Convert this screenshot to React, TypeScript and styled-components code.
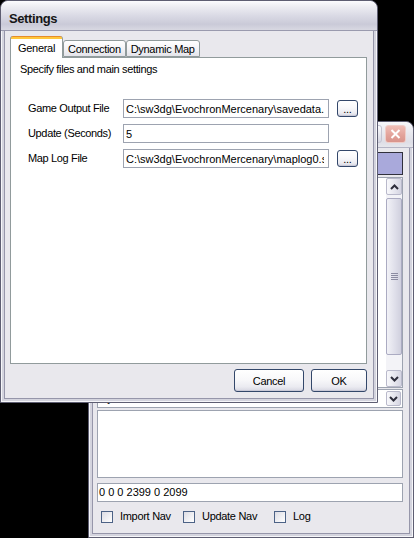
import React from "react";
import styled, { createGlobalStyle } from "styled-components";

const UI_FONT = `"Liberation Sans", Arial, sans-serif`;

const GlobalStyle = createGlobalStyle`
  html, body { margin: 0; padding: 0; background: #000; }
  body {
    font-family: ${UI_FONT};
    font-size: 11px;
    line-height: 13px;
    letter-spacing: -0.3px;
    color: #000;
  }
  *, *::before, *::after { box-sizing: border-box; }
`;

const Desktop = styled.div`
  position: relative;
  width: 414px;
  height: 538px;
  overflow: hidden;
  background: #000;
`;

const Window = styled.div<{ $x: number; $y: number; $w: number; $h: number }>`
  position: absolute;
  left: ${(p) => p.$x}px;
  top: ${(p) => p.$y}px;
  width: ${(p) => p.$w}px;
  height: ${(p) => p.$h}px;
  display: flex;
  flex-direction: column;
  background: #e9e8ed;
  border: 1px solid #5e5e72;
  border-radius: 8px 8px 0 0;
  box-shadow: inset 0 0 0 1px #f6f6f9, inset 0 0 0 3px #d4d4de,
    inset 0 0 0 4px #9696aa;
  overflow: hidden;
`;

const TitleBar = styled.div<{ $h: number; $inactive?: boolean }>`
  flex: none;
  height: ${(p) => p.$h}px;
  display: flex;
  align-items: center;
  padding: ${(p) => (p.$inactive ? "0 7px 2px 8px" : "5px 7px 0 8px")};
  border-radius: 7px 7px 0 0;
  border-bottom: 1px solid ${(p) => (p.$inactive ? "#b4b4c4" : "#9a9aae")};
  background: ${(p) =>
    p.$inactive
      ? "linear-gradient(#f7f7fa, #e9e9ef 40%, #dedee6 80%, #e6e6ec)"
      : "linear-gradient(#fcfcfe 0%, #eeeef3 18%, #dadae5 50%, #cacad8 80%, #d8d8e2 100%)"};
`;

const TitleText = styled.span`
  font: bold 13px ${UI_FONT};
  letter-spacing: -0.4px;
  color: #161616;
`;

const CaptionGroup = styled.div`
  margin-left: auto;
  display: flex;
  gap: 3px;
`;

const CaptionButton = styled.div`
  width: 21px;
  height: 18px;
  border: 1px solid #c4c4d2;
  border-radius: 3px;
  background: linear-gradient(#fbfbfd, #e4e4ec 60%, #d6d6e2);
`;

const CloseButton = styled.div`
  width: 21px;
  height: 18px;
  display: flex;
  align-items: center;
  justify-content: center;
  border: 1px solid #efcdc8;
  border-radius: 3px;
  background: linear-gradient(#efbdb6, #e3a39b 55%, #d9948c);
`;

/* ---------- back window ---------- */

const BackBody = styled.div`
  flex: 1;
  display: flex;
  flex-direction: column;
  padding: 4px 10px 0 8px;
`;

const Swatch = styled.div`
  flex: none;
  height: 23px;
  background: #a9a9db;
  border: 1px solid #30303c;
`;

const ListBox = styled.div`
  flex: none;
  height: 211px;
  margin-top: 2px;
  display: flex;
  background: #fff;
  border: 1px solid #9da3b0;
`;

const ListArea = styled.div`
  flex: 1;
`;

const VScroll = styled.div`
  flex: none;
  width: 16px;
  display: flex;
  flex-direction: column;
  background: #f3f3f7;
`;

const ScrollBtn = styled.div`
  flex: none;
  height: 17px;
  display: flex;
  align-items: center;
  justify-content: center;
  border: 1px solid #b9b9cb;
  border-radius: 2px;
  background: linear-gradient(90deg, #f8f8fb, #e4e4ed 60%, #d5d5e2);
`;

const Track = styled.div`
  flex: 1;
  display: flex;
  flex-direction: column;
  padding: 3px 0 15px;
`;

const Thumb = styled.div`
  flex: 1;
  display: flex;
  flex-direction: column;
  align-items: center;
  justify-content: center;
  gap: 1px;
  border: 1px solid #ababc2;
  border-radius: 2px;
  background: linear-gradient(90deg, #f2f2f7, #dedee9 60%, #d0d0de);
`;

const GripLine = styled.span`
  width: 7px;
  height: 1px;
  background: #8c8ca2;
`;

const Combo = styled.div`
  flex: none;
  height: 19px;
  margin-top: 1px;
  display: flex;
  align-items: center;
  background: #fff;
  border: 1px solid #9da3b0;
  padding: 0 1px 0 2px;
`;

const ComboText = styled.span`
  flex: 1;
  letter-spacing: 0;
`;

const ComboBtn = styled(ScrollBtn)`
  width: 15px;
  height: 15px;
`;

const Memo = styled.div`
  flex: none;
  height: 68px;
  margin-top: 2px;
  background: #fff;
  border: 1px solid #9da3b0;
`;

const Field = styled.div`
  flex: none;
  height: 19px;
  margin-top: 5px;
  display: flex;
  align-items: center;
  padding: 0 1px;
  background: #fff;
  border: 1px solid #9da3b0;
  letter-spacing: 0;
`;

const CheckRow = styled.div`
  flex: none;
  height: 19px;
  margin-top: 5px;
  padding-left: 4px;
  display: grid;
  grid-template-columns: 82px 91px auto;
  align-items: center;
`;

const CheckItem = styled.label`
  display: flex;
  align-items: center;
  gap: 7px;
`;

const CheckBox = styled.span`
  width: 12px;
  height: 12px;
  border: 1px solid #4c6286;
  background: linear-gradient(135deg, #dcdce4, #ffffff);
`;

/* ---------- settings dialog ---------- */

const DialogBody = styled.div`
  flex: 1;
  display: flex;
  flex-direction: column;
  padding: 5px 10px 10px 9px;
`;

const TabStrip = styled.div`
  flex: none;
  height: 21px;
  display: flex;
  align-items: flex-end;
  position: relative;
  z-index: 1;
`;

const Tab = styled.div<{ $active?: boolean }>`
  height: ${(p) => (p.$active ? 22 : 17)}px;
  margin-bottom: ${(p) => (p.$active ? -1 : 0)}px;
  padding: ${(p) => (p.$active ? "3px 7px 0" : "1px 4px 0")};
  display: flex;
  align-items: center;
  white-space: nowrap;
  border: 1px solid #919b9c;
  border-bottom: ${(p) => (p.$active ? "none" : "1px solid #919b9c")};
  border-top: ${(p) => (p.$active ? "none" : "1px solid #919b9c")};
  border-radius: 3px 3px 0 0;
  background: ${(p) =>
    p.$active
      ? "linear-gradient(#e68b2c 0, #e68b2c 1px, #ffc73c 1px, #ffc73c 3px, #ffffff 3px)"
      : "linear-gradient(#ffffff, #f1f1f4 60%, #e4e4ea)"};
`;

const TabPanel = styled.div`
  flex: 1;
  display: flex;
  flex-direction: column;
  padding: 5px 9px 0 9px;
  background: #fff;
  border: 1px solid #919b9c;
`;

const Intro = styled.div`
  letter-spacing: -0.35px;
`;

const FieldGrid = styled.div`
  margin-top: 23px;
  margin-left: 8px;
  display: grid;
  grid-template-columns: 95px 214px 21px;
  grid-auto-rows: 19px;
  row-gap: 6px;
  align-items: center;
`;

const FieldLabel = styled.span`
  letter-spacing: -0.35px;
`;

const TextInput = styled.input`
  width: 206px;
  height: 19px;
  margin: 0;
  padding: 0 4px 0 2px;
  font: 11px ${UI_FONT};
  letter-spacing: 0;
  color: #000;
  background: #fff;
  border: 1px solid #9da3b0;
  outline: none;
`;

const PushButton = styled.button<{ $w: number; $h: number }>`
  width: ${(p) => p.$w}px;
  height: ${(p) => p.$h}px;
  margin: 0;
  padding: 0;
  font: 11px ${UI_FONT};
  letter-spacing: -0.3px;
  color: #000;
  border: 1px solid #33476a;
  border-radius: 3px;
  background: linear-gradient(#ffffff 0%, #f8f8fa 45%, #ebebf1 80%, #d6d6e1 100%);
  box-shadow: inset 0 -1px 0 #c9c9d7;
`;

const ButtonRow = styled.div`
  flex: none;
  margin-top: 5px;
  display: flex;
  justify-content: flex-end;
  gap: 7px;
`;

const Chevron = ({ dir }: { dir: "up" | "down" }) => (
  <svg width="9" height="6" viewBox="0 0 9 6">
    <polyline
      points={dir === "up" ? "1,5 4.5,1.5 8,5" : "1,1 4.5,4.5 8,1"}
      fill="none"
      stroke="#2e2e3c"
      strokeWidth="2"
    />
  </svg>
);

const CloseX = () => (
  <svg width="11" height="10" viewBox="0 0 11 10">
    <path d="M1.5 1 L9.5 9 M9.5 1 L1.5 9" stroke="#fff" strokeWidth="2" fill="none" />
  </svg>
);

const files = [
  { label: "Game Output File", value: "C:\\sw3dg\\EvochronMercenary\\savedata.dat", browse: true },
  { label: "Update (Seconds)", value: "5", browse: false },
  { label: "Map Log File", value: "C:\\sw3dg\\EvochronMercenary\\maplog0.sav", browse: true },
];

export default function App() {
  return (
    <>
      <GlobalStyle />
      <Desktop>
        <Window $x={88} $y={121} $w={326} $h={417}>
          <TitleBar $h={26} $inactive>
            <CaptionGroup>
              <CaptionButton />
              <CloseButton>
                <CloseX />
              </CloseButton>
            </CaptionGroup>
          </TitleBar>
          <BackBody>
            <Swatch />
            <ListBox>
              <ListArea />
              <VScroll>
                <ScrollBtn>
                  <Chevron dir="up" />
                </ScrollBtn>
                <Track>
                  <Thumb>
                    <GripLine />
                    <GripLine />
                    <GripLine />
                    <GripLine />
                  </Thumb>
                </Track>
                <ScrollBtn>
                  <Chevron dir="down" />
                </ScrollBtn>
              </VScroll>
            </ListBox>
            <Combo>
              <ComboText>System</ComboText>
              <ComboBtn>
                <Chevron dir="down" />
              </ComboBtn>
            </Combo>
            <Memo />
            <Field>0 0 0 2399 0 2099</Field>
            <CheckRow>
              <CheckItem>
                <CheckBox />
                Import Nav
              </CheckItem>
              <CheckItem>
                <CheckBox />
                Update Nav
              </CheckItem>
              <CheckItem>
                <CheckBox />
                Log
              </CheckItem>
            </CheckRow>
          </BackBody>
        </Window>

        <Window $x={0} $y={0} $w={378} $h={403}>
          <TitleBar $h={30}>
            <TitleText>Settings</TitleText>
          </TitleBar>
          <DialogBody>
            <TabStrip>
              <Tab $active>General</Tab>
              <Tab>Connection</Tab>
              <Tab>Dynamic Map</Tab>
            </TabStrip>
            <TabPanel>
              <Intro>Specify files and main settings</Intro>
              <FieldGrid>
                {files.map((f) => (
                  <React.Fragment key={f.label}>
                    <FieldLabel>{f.label}</FieldLabel>
                    <TextInput readOnly value={f.value} />
                    {f.browse ? (
                      <PushButton $w={21} $h={17}>...</PushButton>
                    ) : (
                      <span />
                    )}
                  </React.Fragment>
                ))}
              </FieldGrid>
            </TabPanel>
            <ButtonRow>
              <PushButton $w={70} $h={23}>Cancel</PushButton>
              <PushButton $w={56} $h={23}>OK</PushButton>
            </ButtonRow>
          </DialogBody>
        </Window>
      </Desktop>
    </>
  );
}
